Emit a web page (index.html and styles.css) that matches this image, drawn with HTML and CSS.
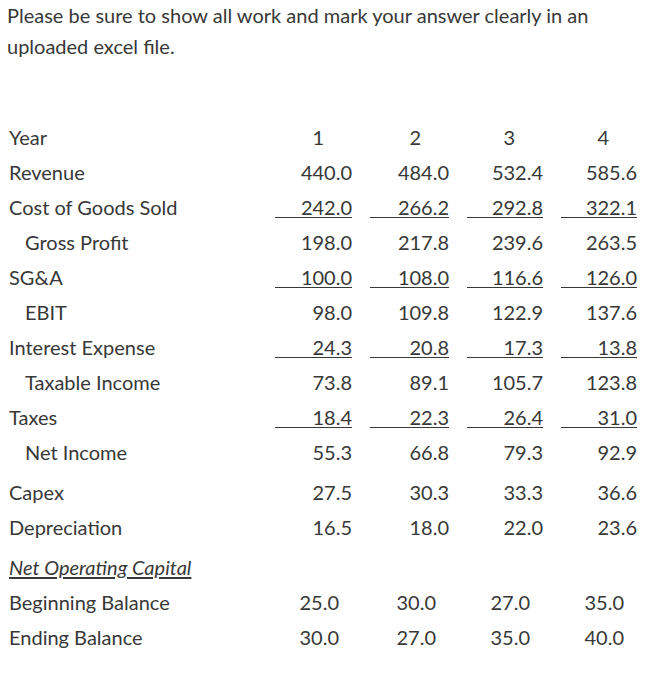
FILE: index.html
```html
<!DOCTYPE html>
<html>
<head>
<meta charset="utf-8">
<link rel="stylesheet" href="styles.css">
</head>
<body>
<p class="intro">Please be sure to show all work and mark your answer clearly in an uploaded excel file.</p>
<div class="sheet">
  <div class="row head"><span class="label">Year</span><span class="num">1</span><span class="num">2</span><span class="num">3</span><span class="num">4</span></div>
  <div class="row"><span class="label">Revenue</span><span class="num">440.0</span><span class="num">484.0</span><span class="num">532.4</span><span class="num">585.6</span></div>
  <div class="row ul"><span class="label">Cost of Goods Sold</span><span class="num"><u>242.0</u></span><span class="num"><u>266.2</u></span><span class="num"><u>292.8</u></span><span class="num"><u>322.1</u></span></div>
  <div class="row"><span class="label sub">Gross Profit</span><span class="num">198.0</span><span class="num">217.8</span><span class="num">239.6</span><span class="num">263.5</span></div>
  <div class="row ul"><span class="label">SG&amp;A</span><span class="num"><u>100.0</u></span><span class="num"><u>108.0</u></span><span class="num"><u>116.6</u></span><span class="num"><u>126.0</u></span></div>
  <div class="row"><span class="label sub">EBIT</span><span class="num">98.0</span><span class="num">109.8</span><span class="num">122.9</span><span class="num">137.6</span></div>
  <div class="row ul"><span class="label">Interest Expense</span><span class="num"><u>24.3</u></span><span class="num"><u>20.8</u></span><span class="num"><u>17.3</u></span><span class="num"><u>13.8</u></span></div>
  <div class="row"><span class="label sub">Taxable Income</span><span class="num">73.8</span><span class="num">89.1</span><span class="num">105.7</span><span class="num">123.8</span></div>
  <div class="row ul"><span class="label">Taxes</span><span class="num"><u>18.4</u></span><span class="num"><u>22.3</u></span><span class="num"><u>26.4</u></span><span class="num"><u>31.0</u></span></div>
  <div class="row"><span class="label sub">Net Income</span><span class="num">55.3</span><span class="num">66.8</span><span class="num">79.3</span><span class="num">92.9</span></div>
  <div class="row spaced"><span class="label">Capex</span><span class="num">27.5</span><span class="num">30.3</span><span class="num">33.3</span><span class="num">36.6</span></div>
  <div class="row"><span class="label">Depreciation</span><span class="num">16.5</span><span class="num">18.0</span><span class="num">22.0</span><span class="num">23.6</span></div>
  <div class="row spaced"><span class="label section">Net Operating Capital</span></div>
  <div class="row inset"><span class="label">Beginning Balance</span><span class="num">25.0</span><span class="num">30.0</span><span class="num">27.0</span><span class="num">35.0</span></div>
  <div class="row inset"><span class="label">Ending Balance</span><span class="num">30.0</span><span class="num">27.0</span><span class="num">35.0</span><span class="num">40.0</span></div>
</div>
</body>
</html>
```
FILE: styles.css
```css
html, body {
  margin: 0;
  padding: 0;
  background: #ffffff;
}
body {
  font-family: Lato, "Noto Sans", sans-serif;
  font-size: 20px;
  color: #383838;
  padding: 0 0 0 7px;
}
.intro {
  margin: 0;
  padding-top: 0;
  line-height: 31px;
  width: 620px;
}
.sheet {
  margin-top: 57px;
  padding-left: 2px;
}
.row {
  display: grid;
  grid-template-columns: 248px 77px 79px 76px 76px;
  column-gap: 18px;
  height: 35px;
  align-items: center;
}
.row.spaced {
  margin-top: 5px;
}
.label.sub {
  padding-left: 16px;
}
.label.section {
  font-style: italic;
  text-decoration: underline;
  text-underline-offset: 2px;
}
.num {
  text-align: right;
}
.head .num {
  padding-right: 28px;
}
.inset .num {
  padding-right: 13px;
}
.num u {
  text-decoration: none;
  display: inline-block;
  width: 100%;
  line-height: 20px;
  border-bottom: 1px solid #383838;
}
```
